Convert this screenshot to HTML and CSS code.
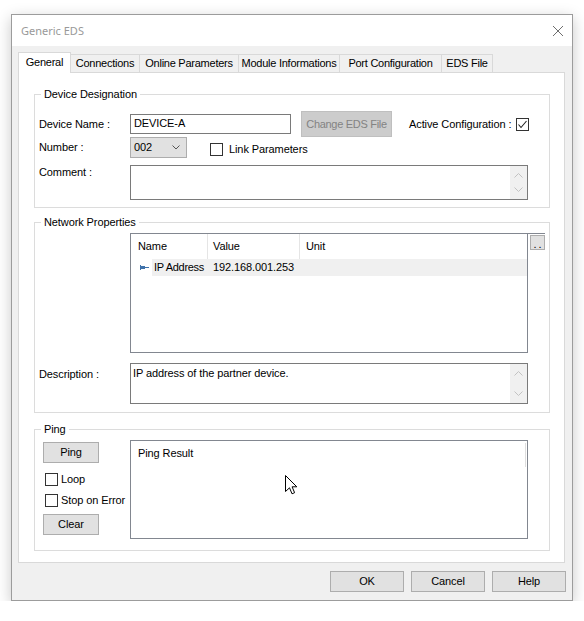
FILE: index.html
```html
<!DOCTYPE html>
<html lang="en">
<head>
    <meta charset="UTF-8">
    <title>Generic EDS</title>
    <link rel="stylesheet" href="styles.css">
</head>
<body>
    <div class="window">
        <div class="titlebar">
            <span class="title">Generic EDS</span>
            <svg class="close" width="10" height="10" viewBox="0 0 10 10"><path d="M0 0L10 10M10 0L0 10" stroke="#6e6e6e" stroke-width="1"/></svg>
        </div>

        <div class="dialog-body">
            <div class="tabs">
                <div class="tab tab-general active">General</div>
                <div class="tab tab-connections">Connections</div>
                <div class="tab tab-online">Online Parameters</div>
                <div class="tab tab-module">Module Informations</div>
                <div class="tab tab-port">Port Configuration</div>
                <div class="tab tab-eds">EDS File</div>
            </div>

            <div class="tab-panel">
                <!-- Device Designation -->
                <fieldset class="group group-device">
                    <legend>Device Designation</legend>
                    <div class="form-row row-name">
                        <span class="field-label">Device Name :</span>
                        <div class="textbox name-box">DEVICE-A</div>
                        <button class="btn btn-disabled change-eds">Change EDS File</button>
                        <span class="active-label">Active Configuration :</span>
                        <span class="checkbox"><svg width="11" height="11" viewBox="0 0 11 11"><path d="M1.5 5.5L4 8.5L9.5 2" fill="none" stroke="#222" stroke-width="1.1"/></svg></span>
                    </div>
                    <div class="form-row row-number">
                        <span class="field-label">Number :</span>
                        <div class="combo">
                            <span>002</span>
                            <svg width="8" height="5" viewBox="0 0 8 5"><path d="M0.5 0.5L4 4L7.5 0.5" fill="none" stroke="#555" stroke-width="1"/></svg>
                        </div>
                        <div class="check-group">
                            <span class="checkbox"></span>
                            <span class="check-label">Link Parameters</span>
                        </div>
                    </div>
                    <div class="form-row row-comment">
                        <span class="field-label label-top">Comment :</span>
                        <div class="memo comment-box">
                            <div class="memo-text"></div>
                            <div class="vscroll">
                                <svg width="9" height="5" viewBox="0 0 9 5"><path d="M0.5 4.5L4.5 0.5L8.5 4.5" fill="none" stroke="#c2c2c2"/></svg>
                                <svg width="9" height="5" viewBox="0 0 9 5"><path d="M0.5 0.5L4.5 4.5L8.5 0.5" fill="none" stroke="#c2c2c2"/></svg>
                            </div>
                        </div>
                    </div>
                </fieldset>

                <!-- Network Properties -->
                <fieldset class="group group-network">
                    <legend>Network Properties</legend>
                    <div class="prop-grid">
                        <div class="listview">
                            <div class="lv-header">
                                <div class="lv-col col-name">Name</div>
                                <div class="lv-col col-value">Value</div>
                                <div class="lv-col col-unit">Unit</div>
                            </div>
                            <div class="lv-row">
                                <div class="lv-icon">
                                    <svg width="9" height="7" viewBox="0 0 9 7"><path d="M0.5 1v5" stroke="#3f72aa"/><rect x="1" y="2" width="4" height="3" fill="#3f72aa"/><path d="M5 3.5h4" stroke="#3f72aa"/></svg>
                                </div>
                                <div class="lv-cells">
                                    <span class="cell-name">IP Address</span>
                                    <span class="cell-value">192.168.001.253</span>
                                </div>
                            </div>
                        </div>
                        <button class="btn btn-dots">..</button>
                    </div>
                    <div class="form-row row-description">
                        <span class="field-label label-desc">Description :</span>
                        <div class="memo desc-box">
                            <div class="memo-text">IP address of the partner device.</div>
                            <div class="vscroll">
                                <svg width="9" height="5" viewBox="0 0 9 5"><path d="M0.5 4.5L4.5 0.5L8.5 4.5" fill="none" stroke="#c2c2c2"/></svg>
                                <svg width="9" height="5" viewBox="0 0 9 5"><path d="M0.5 0.5L4.5 4.5L8.5 0.5" fill="none" stroke="#c2c2c2"/></svg>
                            </div>
                        </div>
                    </div>
                </fieldset>

                <!-- Ping -->
                <fieldset class="group group-ping">
                    <legend>Ping</legend>
                    <div class="ping-area">
                        <div class="ping-controls">
                            <button class="btn btn-small">Ping</button>
                            <div class="check-row row-loop">
                                <span class="checkbox"></span>
                                <span class="check-label">Loop</span>
                            </div>
                            <div class="check-row row-stop">
                                <span class="checkbox"></span>
                                <span class="check-label">Stop on Error</span>
                            </div>
                            <button class="btn btn-small btn-clear">Clear</button>
                        </div>
                        <div class="ping-result">
                            Ping Result
                            <svg class="cursor" width="13" height="20" viewBox="0 0 13 20"><path d="M0.5 0.5L0.5 16.5L4.5 12.8L7 18.8L9.6 17.7L7.1 11.8L11.8 11.8Z" fill="#fff" stroke="#000" stroke-width="1" stroke-linejoin="miter"/></svg>
                        </div>
                    </div>
                </fieldset>
            </div>

            <div class="dialog-footer">
                <button class="btn btn-footer">OK</button>
                <button class="btn btn-footer">Cancel</button>
                <button class="btn btn-footer">Help</button>
            </div>
        </div>
    </div>
</body>
</html>
```

FILE: styles.css
```css
/* Base */
* {
    margin: 0;
    padding: 0;
    box-sizing: border-box;
}

:root {
    --face: #f0f0f0;
    --tab-border: #d9d9d9;
    --group-border: #dcdcdc;
    --edit-border: #7a7a7a;
    --list-border: #828790;
    --btn-face: #e1e1e1;
    --btn-border: #adadad;
}

body {
    font-family: "Liberation Sans", Arial, sans-serif;
    font-size: 11px;
    line-height: 13px;
    letter-spacing: -0.1px;
    color: #000;
    background: #fff;
}

button {
    font: inherit;
    color: inherit;
    letter-spacing: inherit;
}

/* Window frame */
.window {
    margin: 14px 0 0 11px;
    width: 562px;
    height: 587px;
    border: 1px solid #9c9c9c;
    box-shadow: 0 4px 14px rgba(0, 0, 0, 0.22);
    background: var(--face);
    display: flex;
    flex-direction: column;
}

.titlebar {
    height: 31px;
    background: #fff;
    display: flex;
    align-items: center;
    justify-content: space-between;
    padding: 0 9px;
}

.title {
    font-family: "Noto Sans", sans-serif;
    font-size: 11px;
    letter-spacing: 0;
    color: #999;
}

.dialog-body {
    flex: 1;
    padding: 6px 7px 0 6px;
}

/* Tabs */
.tabs {
    display: flex;
    align-items: flex-end;
    height: 20px;
}

.tab {
    height: 18px;
    margin-left: -1px;
    padding-top: 2px;
    border: 1px solid var(--tab-border);
    border-bottom: none;
    background: var(--face);
    text-align: center;
    white-space: nowrap;
    letter-spacing: -0.25px;
}

.tab:first-child { margin-left: 0; }

.tab.active {
    height: 21px;
    margin-bottom: -1px;
    padding-top: 3px;
    background: #fff;
    position: relative;
    z-index: 1;
}

.tab-general { width: 53px; }
.tab-connections { width: 70px; }
.tab-online { width: 100px; }
.tab-module { width: 102px; }
.tab-port { width: 103px; }
.tab-eds { width: 52px; }

.tab-panel {
    height: 491px;
    padding: 15px 14px 0 15px;
    border: 1px solid var(--tab-border);
    background: #fff;
}

/* Group boxes */
.group {
    border: 1px solid var(--group-border);
    padding: 0 4px 7px;
    min-width: 0;
}

.group legend {
    margin-left: 2px;
    padding: 0 3px;
    line-height: 13px;
}

.group-network {
    margin-top: 8px;
    padding-bottom: 8px;
}

.group-ping {
    margin-top: 10px;
    padding-bottom: 11px;
}

.form-row {
    display: flex;
    align-items: center;
}

.field-label {
    width: 91px;
    flex-shrink: 0;
    white-space: nowrap;
}

.label-top {
    align-self: flex-start;
    padding-top: 1px;
}

.label-desc {
    align-self: flex-start;
    padding-top: 5px;
}

.row-name {
    height: 26px;
    margin-top: 10px;
}

.row-number {
    height: 21px;
}

.row-comment {
    margin-top: 7px;
    align-items: flex-start;
}

.row-description {
    margin-top: 10px;
    align-items: flex-start;
}

/* Edit controls */
.textbox {
    height: 20px;
    border: 1px solid var(--edit-border);
    background: #fff;
    padding: 2px 3px 0;
}

.name-box {
    width: 161px;
}

.combo {
    width: 57px;
    height: 21px;
    border: 1px solid var(--btn-border);
    background: var(--btn-face);
    padding: 0 6px 0 3px;
    display: flex;
    align-items: center;
    justify-content: space-between;
}

.memo {
    width: 398px;
    display: flex;
    border: 1px solid var(--edit-border);
    background: #fff;
}

.comment-box { height: 35px; }
.desc-box { height: 41px; }

.memo-text {
    flex: 1;
    padding: 3px 2px 0;
}

.vscroll {
    width: 17px;
    background: var(--face);
    padding: 7px 0;
    display: flex;
    flex-direction: column;
    align-items: center;
    justify-content: space-between;
}

.vscroll svg { display: block; }

/* Buttons */
.btn {
    height: 21px;
    border: 1px solid var(--btn-border);
    background: var(--btn-face);
    text-align: center;
    cursor: default;
}

.btn-disabled {
    background: #cccccc;
    border-color: #bfbfbf;
    color: #838383;
}

.change-eds {
    width: 91px;
    height: 26px;
    margin-left: 10px;
    padding: 0;
    letter-spacing: -0.3px;
}

.btn-small {
    width: 56px;
}

.btn-footer {
    width: 74px;
}

.btn-dots {
    width: 15px;
    height: 15px;
    margin: 1px 0 0 2px;
    display: flex;
    align-items: flex-end;
    justify-content: center;
    line-height: 9px;
    letter-spacing: 2px;
    padding-left: 2px;
}

/* Checkboxes */
.checkbox {
    width: 13px;
    height: 13px;
    flex-shrink: 0;
    border: 1px solid #333;
    background: #fff;
    display: flex;
    align-items: center;
    justify-content: center;
}

.active-label {
    width: 107px;
    margin-left: 17px;
    white-space: nowrap;
}

.check-group {
    display: flex;
    align-items: center;
    margin: 4px 0 0 23px;
}

.check-group .check-label { margin-left: 6px; }

/* Property list */
.prop-grid {
    display: flex;
    align-items: flex-start;
    width: 415px;
    height: 120px;
    margin: 4px 0 0 91px;
    border-top: 1px solid var(--list-border);
}

.listview {
    width: 398px;
    height: 119px;
    border: 1px solid var(--list-border);
    border-top: none;
    background: #fff;
}

.lv-header {
    display: flex;
    height: 25px;
}

.lv-col {
    display: flex;
    align-items: center;
}

.col-name {
    width: 77px;
    padding-left: 7px;
    border-right: 1px solid #e5e5e5;
}

.col-value {
    width: 92px;
    padding-left: 5px;
    border-right: 1px solid #e5e5e5;
}

.col-unit {
    flex: 1;
    padding-left: 6px;
}

.lv-row {
    display: flex;
    height: 17px;
}

.lv-icon {
    width: 21px;
    padding-left: 9px;
    display: flex;
    align-items: center;
}

.lv-cells {
    flex: 1;
    background: var(--face);
    display: flex;
    align-items: center;
}

.cell-name {
    width: 56px;
    padding-left: 2px;
    white-space: nowrap;
    letter-spacing: -0.3px;
    overflow: hidden;
}

.cell-value {
    padding-left: 5px;
}

/* Ping */
.ping-area {
    display: flex;
    align-items: flex-start;
    margin-top: 4px;
}

.ping-controls {
    width: 91px;
    padding-left: 4px;
    margin-top: 2px;
    display: flex;
    flex-direction: column;
    align-items: flex-start;
}

.check-row {
    height: 17px;
    padding-left: 2px;
    display: flex;
    align-items: center;
}

.check-row .check-label {
    margin-left: 3px;
    white-space: nowrap;
}

.row-loop { margin-top: 8px; }
.row-stop { margin-top: 4px; }
.btn-clear { margin-top: 5px; }

.ping-result {
    width: 398px;
    height: 99px;
    padding: 6px 0 0 7px;
    border: 1px solid var(--list-border);
    background: #fff;
    position: relative;
}

.ping-result::after {
    content: "";
    position: absolute;
    top: 2px;
    right: 1px;
    width: 1px;
    height: 24px;
    background: #dedede;
}

.cursor {
    position: absolute;
    left: 154px;
    top: 34px;
}

/* Footer */
.dialog-footer {
    display: flex;
    justify-content: flex-end;
    gap: 7px;
    margin: 8px -1px 0 0;
}
```
